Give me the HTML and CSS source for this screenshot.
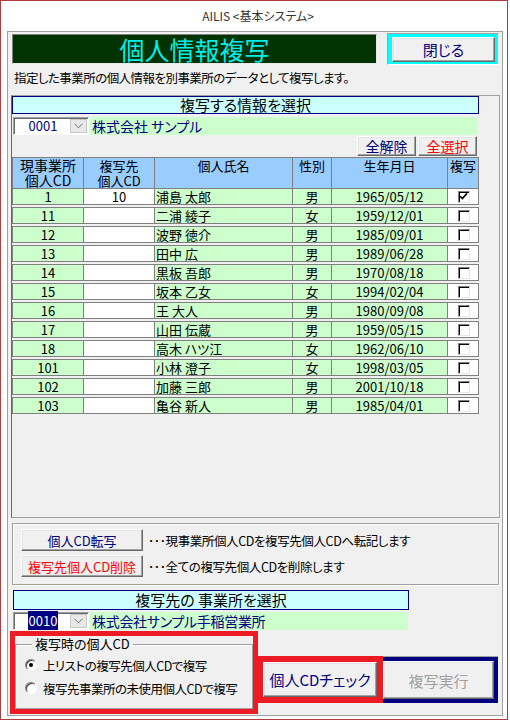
FILE: index.html
```html
<!DOCTYPE html>
<html lang="ja">
<head>
<meta charset="utf-8">
<title>AILIS</title>
<link rel="stylesheet" href="styles.css">
</head>
<body>
<div class="window">
  <div class="titlebar">AILIS &lt;基本システム&gt;</div>
  <div class="form">
    <div class="head">
      <div class="title-box">個人情報複写</div>
      <div class="close-frame"><div class="btn close-btn">閉じる</div></div>
    </div>
    <div class="desc">指定した事業所の個人情報を別事業所のデータとして複写します。</div>

    <div class="subform">
      <div class="section-title">複写する情報を選択</div>
      <div class="combo-row">
        <div class="combo">
          <span class="combo-val">0001</span>
          <span class="combo-btn"><svg width="9" height="6" viewBox="0 0 9 6"><polyline points="0.5,0.8 4.5,4.8 8.5,0.8" fill="none" stroke="#707070" stroke-width="1"/></svg></span>
        </div>
        <div class="combo-name wide">株式会社 サンプル</div>
      </div>
      <div class="sel-row">
        <div class="btn sel-btn navy">全解除</div>
        <div class="btn sel-btn red">全選択</div>
      </div>
      <div class="grid grid-head">
        <div class="hc big"><span class="hl">現事業所</span><span class="hl">個人CD</span></div>
        <div class="hc"><span class="hl">複写先</span><span class="hl">個人CD</span></div>
        <div class="hc">個人氏名</div>
        <div class="hc">性別</div>
        <div class="hc">生年月日</div>
        <div class="hc">複写</div>
      </div>
      <div class="rows">
        <div class="grid row"><div class="c g">1</div><div class="c w">10</div><div class="c g l">浦島 太郎</div><div class="c g">男</div><div class="c g">1965/05/12</div><div class="c w"><span class="chk"><svg width="9" height="9" viewBox="0 0 9 9"><polyline points="1.2,4.2 3.4,6.6 8,1.4" fill="none" stroke="#000" stroke-width="1.7"/></svg></span></div></div>
        <div class="grid row"><div class="c g">11</div><div class="c w"></div><div class="c g l">二浦 綾子</div><div class="c g">女</div><div class="c g">1959/12/01</div><div class="c w"><span class="chk"></span></div></div>
        <div class="grid row"><div class="c g">12</div><div class="c w"></div><div class="c g l">波野 徳介</div><div class="c g">男</div><div class="c g">1985/09/01</div><div class="c w"><span class="chk"></span></div></div>
        <div class="grid row"><div class="c g">13</div><div class="c w"></div><div class="c g l">田中 広</div><div class="c g">男</div><div class="c g">1989/06/28</div><div class="c w"><span class="chk"></span></div></div>
        <div class="grid row"><div class="c g">14</div><div class="c w"></div><div class="c g l">黒板 吾郎</div><div class="c g">男</div><div class="c g">1970/08/18</div><div class="c w"><span class="chk"></span></div></div>
        <div class="grid row"><div class="c g">15</div><div class="c w"></div><div class="c g l">坂本 乙女</div><div class="c g">女</div><div class="c g">1994/02/04</div><div class="c w"><span class="chk"></span></div></div>
        <div class="grid row"><div class="c g">16</div><div class="c w"></div><div class="c g l">王 大人</div><div class="c g">男</div><div class="c g">1980/09/08</div><div class="c w"><span class="chk"></span></div></div>
        <div class="grid row"><div class="c g">17</div><div class="c w"></div><div class="c g l">山田 伝蔵</div><div class="c g">男</div><div class="c g">1959/05/15</div><div class="c w"><span class="chk"></span></div></div>
        <div class="grid row"><div class="c g">18</div><div class="c w"></div><div class="c g l">高木 ハツ江</div><div class="c g">女</div><div class="c g">1962/06/10</div><div class="c w"><span class="chk"></span></div></div>
        <div class="grid row"><div class="c g">101</div><div class="c w"></div><div class="c g l">小林 澄子</div><div class="c g">女</div><div class="c g">1998/03/05</div><div class="c w"><span class="chk"></span></div></div>
        <div class="grid row"><div class="c g">102</div><div class="c w"></div><div class="c g l">加藤 三郎</div><div class="c g">男</div><div class="c g">2001/10/18</div><div class="c w"><span class="chk"></span></div></div>
        <div class="grid row"><div class="c g">103</div><div class="c w"></div><div class="c g l">亀谷 新人</div><div class="c g">男</div><div class="c g">1985/04/01</div><div class="c w"><span class="chk"></span></div></div>
      </div>
    </div>

    <div class="op-frame">
      <div class="op-row"><div class="btn op-btn navy">個人CD転写</div><span class="op-text">･･･現事業所個人CDを複写先個人CDへ転記します</span></div>
      <div class="op-row"><div class="btn op-btn red">複写先個人CD削除</div><span class="op-text">･･･全ての複写先個人CDを削除します</span></div>
    </div>

    <div class="section-title s2">複写先の 事業所を選択</div>
    <div class="combo-row r2">
      <div class="combo">
        <span class="combo-val"><span class="selected">0010</span></span>
        <span class="combo-btn"><svg width="9" height="6" viewBox="0 0 9 6"><polyline points="0.5,0.8 4.5,4.8 8.5,0.8" fill="none" stroke="#707070" stroke-width="1"/></svg></span>
      </div>
      <div class="combo-name narrow">株式会社サンプル手稲営業所</div>
    </div>

    <div class="bottom">
      <div class="annot a1">
        <fieldset class="group">
          <legend>複写時の個人CD</legend>
          <div class="opt"><span class="radio"><span class="dot"></span></span><span>上リストの複写先個人CDで複写</span></div>
          <div class="opt"><span class="radio"></span><span>複写先事業所の未使用個人CDで複写</span></div>
        </fieldset>
      </div>
      <div class="annot a2"><div class="btn check-btn navy">個人CDチェック</div></div>
      <div class="exec-frame"><div class="btn exec-btn">複写実行</div></div>
    </div>
  </div>
</div>
</body>
</html>
```
FILE: styles.css
```css
* { box-sizing: border-box; }
html, body { margin: 0; padding: 0; background: #fff; }
body {
  font-family: "Noto Sans CJK JP", "Noto Sans", sans-serif;
  font-feature-settings: "palt" 1;
  color: #000;
}
.window {
  width: 508px;
  height: 720px;
  border: 1px solid #b23b3b;
  background: #fff;
}
.titlebar {
  height: 30px;
  line-height: 30px;
  padding-left: 8px;
  text-align: center;
  font-size: 12px;
  color: #333;
}
.form {
  margin-left: 6px;
  width: 496px;
  height: 685px;
  border: 1px solid #a0a0a0;
  background: #f0f0f0;
}
.head {
  display: flex;
  align-items: center;
  height: 34px;
  padding-left: 4px;
}
.title-box {
  width: 365px;
  height: 30px;
  background: #003300;
  border: 1px solid;
  border-color: #808080 #e8e8e8 #e8e8e8 #808080;
  color: #00eeee;
  font-size: 25px;
  line-height: 28px;
  text-align: center;
}
.close-frame {
  margin-left: 10px;
  width: 112px;
  height: 32px;
  border: 1px solid;
  border-color: #a0a0a0 #ffffff #ffffff #a0a0a0;
  background: #00ffff;
  padding: 3px 3px 2px 4px;
}
.btn {
  display: flex;
  align-items: center;
  justify-content: center;
  background: #f0f0f0;
  border: 1px solid;
  border-color: #ffffff #696969 #696969 #ffffff;
  box-shadow: inset -1px -1px 0 #a0a0a0, inset 1px 1px 0 #e3e3e3;
  white-space: nowrap;
}
.close-btn {
  width: 100%;
  height: 100%;
  color: #000080;
  font-size: 15px;
}
.navy { color: #000080; }
.red { color: #ff0000; }
.desc {
  height: 29px;
  line-height: 24px;
  padding-left: 6px;
  font-size: 12.5px;
  letter-spacing: -0.55px;
  white-space: nowrap;
}
.subform {
  margin-left: 3px;
  width: 489px;
  height: 423px;
  border: 1px solid;
  border-color: #a0a0a0 #a0a0a0 #a0a0a0 #696969;
}
.section-title {
  width: 467px;
  height: 18px;
  border: 1px solid #000080;
  background: #ccffff;
  font-size: 15px;
  line-height: 16px;
  text-align: center;
}
.combo-row {
  display: flex;
  height: 18px;
  margin-top: 3px;
  padding-left: 1px;
}
.combo {
  display: flex;
  width: 76px;
  height: 18px;
  border: 1px solid;
  border-color: #a0a0a0 #ffffff #ffffff #a0a0a0;
  box-shadow: inset 1px 1px 0 #696969;
  background: #fff;
}
.combo-val {
  flex: 1;
  padding-left: 2px;
  color: #000080;
  font-size: 13px;
  line-height: 16px;
  text-align: center;
}
.combo-btn {
  display: flex;
  align-items: center;
  justify-content: center;
  width: 17px;
  height: 14px;
  margin: 1px 1px 0 0;
  background: #e8e8e8;
  border: 1px solid #c8c8c8;
}
.combo-name {
  margin-left: 1px;
  background: #ccffcc;
  color: #000080;
  font-size: 14px;
  line-height: 18px;
  padding-left: 2px;
  white-space: nowrap;
}
.combo-name.wide { width: 387px; }
.combo-name.narrow { width: 318px; letter-spacing: -0.3px; }
.selected {
  background: #000080;
  color: #fff;
  padding: 0 1px;
}
.sel-row {
  display: flex;
  justify-content: flex-end;
  gap: 2px;
  width: 467px;
  margin-top: 1px;
  padding-right: 2px;
}
.sel-btn {
  width: 59px;
  height: 20px;
  font-size: 14px;
}
.grid {
  display: grid;
  grid-template-columns: 71px 71px 138px 39px 116px 31px;
  width: 467px;
  border-left: 1px solid #808080;
}
.grid-head {
  margin-top: 1px;
  height: 31px;
  border-top: 1px solid #808080;
  background: #99ccff;
}
.hc {
  display: flex;
  flex-direction: column;
  align-items: center;
  border-right: 1px solid #808080;
  font-size: 13px;
  line-height: 15px;
}
.hl { display: block; height: 15px; line-height: 15px; }
.hc.big { font-size: 14px; }
.row {
  height: 17px;
  border-top: 1px solid #808080;
  border-bottom: 1px solid #808080;
  margin-bottom: 2px;
}
.c {
  border-right: 1px solid #808080;
  font-size: 13px;
  line-height: 15px;
  text-align: center;
  white-space: nowrap;
}
.c.g { background: #ccffcc; }
.c.w { background: #ffffff; display: flex; align-items: center; justify-content: center; }
.c.l { text-align: left; padding-left: 1px; }
.chk {
  display: flex;
  align-items: center;
  justify-content: center;
  width: 12px;
  height: 12px;
  margin-left: 1px;
  border: 1px solid;
  border-color: #808080 #e6e6e6 #e6e6e6 #808080;
  box-shadow: inset 1px 1px 0 #000;
  background: #fff;
}
.op-frame {
  margin: 5px 0 0 4px;
  width: 487px;
  height: 62px;
  border: 1px solid #a0a0a0;
  box-shadow: inset 1px 1px 0 #fff, 1px 1px 0 #fff;
  padding: 5px 0 0 8px;
  display: flex;
  flex-direction: column;
  gap: 4px;
}
.op-row {
  display: flex;
  align-items: center;
  height: 22px;
}
.op-btn {
  width: 122px;
  height: 22px;
  font-size: 13px;
}
.op-text {
  margin-left: 5px;
  font-size: 12.5px;
  letter-spacing: -0.4px;
  white-space: nowrap;
}
.section-title.s2 {
  margin: 5px 0 0 5px;
  width: 396px;
  height: 20px;
  line-height: 18px;
}
.combo-row.r2 {
  margin-top: 2px;
  padding-left: 5px;
}
.bottom {
  display: flex;
  align-items: flex-start;
  margin-top: 1px;
  padding-left: 2px;
}
.annot {
  border: 5px solid #ed1c24;
}
.a1 {
  width: 248px;
  height: 83px;
}
.group {
  margin: 0;
  padding: 0 0 0 9px;
  height: 73px;
  border: 1px solid #a0a0a0;
  box-shadow: inset 1px 1px 0 #fff;
  min-width: 0;
}
.group legend {
  margin-left: 7px;
  padding: 0 3px;
  font-size: 13px;
  line-height: 16px;
}
.opt {
  display: flex;
  align-items: center;
  height: 20px;
  margin-top: 3px;
  font-size: 12.5px;
  letter-spacing: -0.5px;
  white-space: nowrap;
}
.radio {
  display: flex;
  align-items: center;
  justify-content: center;
  flex: 0 0 12px;
  width: 12px;
  height: 12px;
  margin-right: 6px;
  border-radius: 50%;
  border: 1px solid;
  border-color: #808080 #ffffff #ffffff #808080;
  box-shadow: inset 1px 1px 0 #404040;
  background: #fff;
}
.dot {
  width: 4px;
  height: 4px;
  border-radius: 50%;
  background: #000;
}
.a2 {
  margin: 25px 0 0 -1px;
  width: 126px;
  height: 47px;
  border-width: 6px;
}
.check-btn {
  width: 100%;
  height: 100%;
  font-size: 15px;
}
.exec-frame {
  margin-top: 26px;
  width: 115px;
  height: 46px;
  border: 4px solid #000080;
  border-left-width: 0;
  box-shadow: 0 -1px 0 #a0a0a0;
}
.exec-btn {
  width: 100%;
  height: 100%;
  color: #a0a0a0;
  font-size: 15px;
}
```
